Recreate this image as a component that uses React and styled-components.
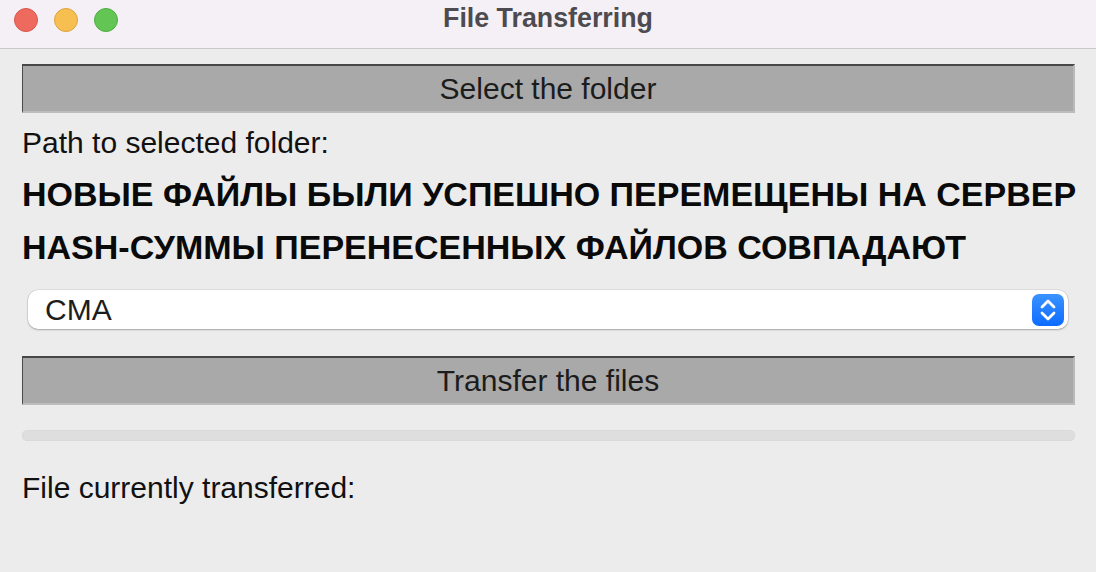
import React from "react";
import styled, { createGlobalStyle } from "styled-components";

const Global = createGlobalStyle`
  html, body { margin: 0; padding: 0; }
  body {
    width: 1096px;
    height: 572px;
    overflow: hidden;
    background: #ececec;
    font-family: "Liberation Sans", Arial, Helvetica, sans-serif;
  }
`;

const Window = styled.div`
  width: 1096px;
  height: 572px;
  display: flex;
  flex-direction: column;
  background: #ececec;
`;

const TitleBar = styled.div`
  height: 48px;
  flex: none;
  background: #f5f0f6;
  border-bottom: 1px solid #c9c7ca;
  display: flex;
  align-items: center;
  position: relative;
`;

const Lights = styled.div`
  display: flex;
  gap: 16px;
  padding-left: 14px;
  margin-top: -9px;
`;

const Light = styled.span`
  width: 24px;
  height: 24px;
  border-radius: 50%;
  box-sizing: border-box;
  background: ${(p) => p.$bg};
  border: 1px solid ${(p) => p.$bd};
`;

const Title = styled.div`
  position: absolute;
  left: 0;
  right: 0;
  top: 3px;
  text-align: center;
  font-size: 26.8px;
  font-weight: bold;
  color: #4d4b4f;
`;

const Body = styled.div`
  display: flex;
  flex-direction: column;
  padding: 15px 21px 0 22px;
`;

const Button = styled.div`
  height: 49px;
  box-sizing: border-box;
  background: #a9a9a9;
  border-top: 2px solid #474747;
  border-left: 1px solid #4a4a4a;
  border-right: 2px solid #b9b9b9;
  border-bottom: 2px solid #bdbdbd;
  display: flex;
  align-items: center;
  justify-content: center;
  font-size: 30px;
  color: #1c1c1c;
  margin-top: ${(p) => p.$mt || 0}px;
`;

const Label = styled.div`
  font-size: 30px;
  line-height: 36px;
  color: #111;
  margin-top: ${(p) => p.$mt || 0}px;
`;

const Heading = styled.div`
  font-size: 34px;
  font-weight: bold;
  line-height: 53px;
  color: #0a0a0a;
  white-space: nowrap;
  margin-top: ${(p) => p.$mt || 0}px;
`;

const Select = styled.div`
  margin: 16px 7px 0 6px;
  height: 39px;
  box-sizing: border-box;
  background: #ffffff;
  border-radius: 10px;
  box-shadow: 0 0 0 0.5px rgba(0, 0, 0, 0.12), 0 1px 2px rgba(0, 0, 0, 0.25);
  display: flex;
  align-items: center;
  justify-content: space-between;
  padding: 0 4px 0 17px;
`;

const SelectText = styled.span`
  font-size: 30px;
  color: #1d1d1d;
`;

const Stepper = styled.span`
  width: 32px;
  height: 32px;
  border-radius: 7px;
  background: linear-gradient(#3b93ff, #0c6cff);
  display: flex;
  align-items: center;
  justify-content: center;
`;

const Progress = styled.div`
  margin-top: 25px;
  height: 11px;
  border-radius: 6px;
  background: #dedede;
  box-shadow: inset 0 0 0 0.5px #d6d6d6;
`;

export default function App() {
  return (
    <>
      <Global />
      <Window>
        <TitleBar>
          <Lights>
            <Light $bg="#ee6a5f" $bd="#d8574d" />
            <Light $bg="#f6bf4f" $bd="#dda33c" />
            <Light $bg="#62c554" $bd="#4eac42" />
          </Lights>
          <Title>File Transferring</Title>
        </TitleBar>
        <Body>
          <Button>Select the folder</Button>
          <Label $mt={12}>Path to selected folder:</Label>
          <Heading $mt={7}>НОВЫЕ ФАЙЛЫ БЫЛИ УСПЕШНО ПЕРЕМЕЩЕНЫ НА СЕРВЕР</Heading>
          <Heading>HASH-СУММЫ ПЕРЕНЕСЕННЫХ ФАЙЛОВ СОВПАДАЮТ</Heading>
          <Select>
            <SelectText>CMA</SelectText>
            <Stepper>
              <svg width="20" height="28" viewBox="0 0 20 28" fill="none" stroke="#fff" strokeWidth="2.8" strokeLinecap="round" strokeLinejoin="round">
                <path d="M4 11 L10 5 L16 11" />
                <path d="M4 17 L10 23 L16 17" />
              </svg>
            </Stepper>
          </Select>
          <Button $mt={27}>Transfer the files</Button>
          <Progress />
          <Label $mt={29}>File currently transferred:</Label>
        </Body>
      </Window>
    </>
  );
}
